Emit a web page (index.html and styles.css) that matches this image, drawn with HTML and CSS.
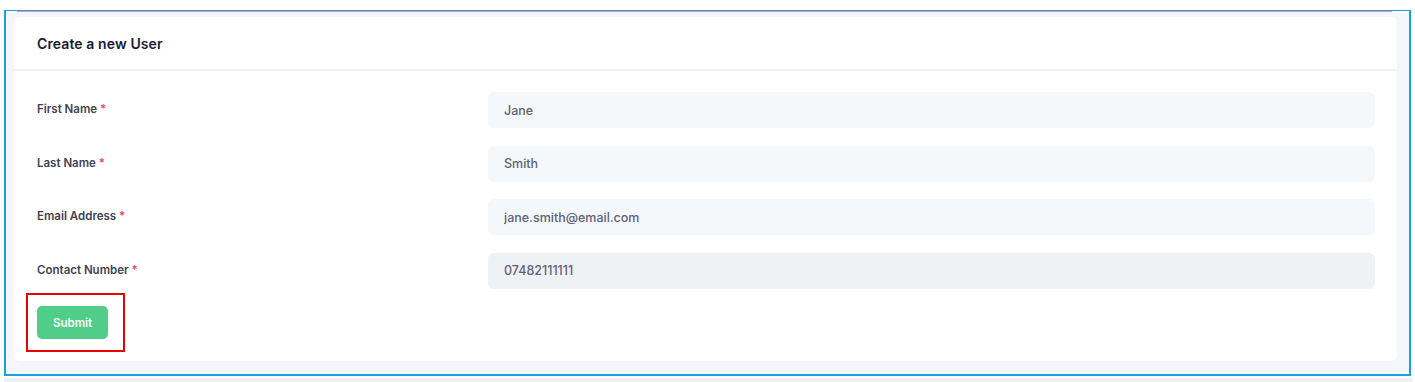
FILE: index.html
```html
<!DOCTYPE html>
<html lang="en">
<head>
    <meta charset="UTF-8">
    <meta name="viewport" content="width=device-width, initial-scale=1.0">
    <title>Create a new User</title>
    <link rel="stylesheet" href="styles.css">
</head>
<body>
    <div class="frame">
        <div class="accent"></div>
        <div class="card">
            <div class="card-header">Create a new User</div>
            <form class="card-body">
                <div class="form-row">
                    <label class="form-label">First Name <span class="req">*</span></label>
                    <input class="form-control" type="text" value="Jane">
                </div>
                <div class="form-row">
                    <label class="form-label">Last Name <span class="req">*</span></label>
                    <input class="form-control" type="text" value="Smith">
                </div>
                <div class="form-row">
                    <label class="form-label">Email Address <span class="req">*</span></label>
                    <input class="form-control" type="text" value="jane.smith@email.com">
                </div>
                <div class="form-row">
                    <label class="form-label">Contact Number <span class="req">*</span></label>
                    <input class="form-control readonly" type="text" value="07482111111" readonly>
                </div>
                <div class="submit-wrap">
                    <button type="button" class="btn-success">Submit</button>
                    <span class="highlight"></span>
                </div>
            </form>
        </div>
    </div>
    <div class="bottom-strip"></div>
</body>
</html>
```

FILE: styles.css
```css
body {
    margin: 0;
    background: #ffffff;
    font-family: Inter, "Noto Sans", sans-serif;
}
.frame {
    margin: 10px 0 0 4px;
    width: 1407px;
    height: 366px;
    box-sizing: border-box;
    border: 2px solid #1aa1df;
    border-top-width: 1px;
    background: #f4f6f9;
    padding: 0 12px 13px 8px;
}
.accent {
    height: 1px;
    margin: 0 5px 5px 3px;
    background: #f08db0;
}
.card {
    background: #ffffff;
    border-radius: 6px;
    height: 344px;
}
.card-header {
    height: 52px;
    display: flex;
    align-items: center;
    padding: 0 23px;
    border-bottom: 2px solid #eff2f5;
    font-size: 14px;
    font-weight: 600;
    color: #181c32;
    letter-spacing: 0.1px;
}
.card-body {
    padding: 21px 22px 0 23px;
    margin: 0;
}
.form-row {
    display: grid;
    grid-template-columns: 451px 1fr;
    align-items: center;
    margin-bottom: 17.6px;
}
.form-label {
    font-size: 11.5px;
    font-weight: 600;
    color: #3f4254;
    margin-top: -2px;
}
.req {
    color: #f1416c;
}
.form-control {
    height: 36px;
    box-sizing: border-box;
    border: none;
    border-radius: 6px;
    background: #f5f8fa;
    padding: 0 16px;
    font-family: Inter, "Noto Sans", sans-serif;
    font-size: 12.5px;
    font-weight: 500;
    color: #5e6278;
    outline: none;
}
.form-control.readonly {
    background: #eff2f5;
}
.submit-wrap {
    position: relative;
    margin-top: 0;
    width: 71px;
}
.btn-success {
    width: 71px;
    height: 33px;
    border: none;
    border-radius: 5px;
    background: #50cd89;
    color: #ffffff;
    font-family: Inter, "Noto Sans", sans-serif;
    font-size: 11.5px;
    font-weight: 600;
    cursor: pointer;
}
.highlight {
    position: absolute;
    left: -11px;
    top: -13px;
    width: 99px;
    height: 59px;
    box-sizing: border-box;
    border: 2px solid #ee0000;
}
.bottom-strip {
    margin: 2px 0 0 4px;
    width: 1409px;
    height: 6px;
    background: #f1f1f1;
}
```
